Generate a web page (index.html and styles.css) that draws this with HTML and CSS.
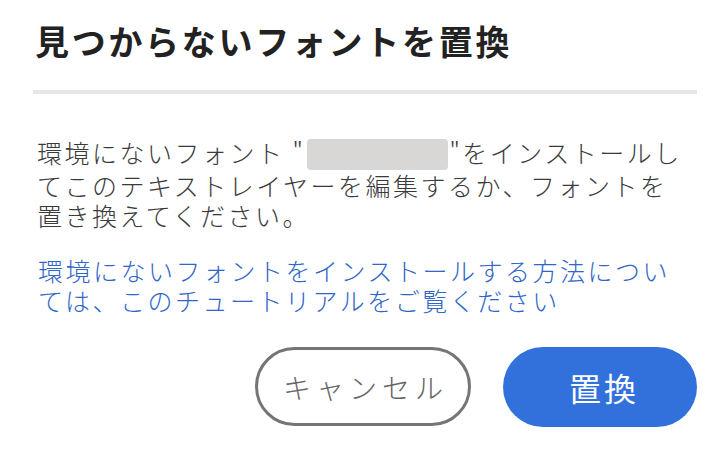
FILE: index.html
```html
<!DOCTYPE html>
<html lang="ja">
<head>
<meta charset="utf-8">
<title>見つからないフォントを置換</title>
<link rel="stylesheet" href="styles.css">
</head>
<body>
<div class="dialog">
  <h1 class="title">見つからないフォントを置換</h1>
  <div class="divider"></div>
  <p class="message">環境にないフォント "<span class="redacted"></span>"をインストールしてこのテキストレイヤーを編集するか、フォントを置き換えてください。</p>
  <p class="link">環境にないフォントをインストールする方法については、このチュートリアルをご覧ください</p>
  <div class="actions">
    <button class="btn btn-cancel">キャンセル</button>
    <button class="btn btn-primary">置換</button>
  </div>
</div>
</body>
</html>
```

FILE: styles.css
```css
html, body {
  margin: 0;
  padding: 0;
  background: #ffffff;
}

body {
  width: 714px;
  height: 460px;
  overflow: hidden;
  font-family: "Noto Sans CJK JP", "Noto Sans", sans-serif;
}

.dialog {
  padding: 21px 17px 0 33px;
}

.title {
  margin: 0 0 0 2px;
  font-size: 34px;
  line-height: 40px;
  font-weight: 700;
  letter-spacing: 2.7px;
  color: #222222;
}

.divider {
  margin-top: 29px;
  height: 4px;
  background: #e6e6e6;
}

.message {
  margin: 43px 7px 0 4px;
  font-size: 25px;
  line-height: 30px;
  font-weight: 300;
  letter-spacing: 2.5px;
  color: #3a3a3a;
}

.redacted {
  display: inline-block;
  width: 141px;
  height: 31px;
  vertical-align: -7px;
  background: #d9d7d6;
  border-radius: 4px;
  margin: 0 1px 0 2px;
}

.link {
  margin: 25px 7px 0 5px;
  font-size: 25px;
  line-height: 30px;
  font-weight: 300;
  letter-spacing: 2.5px;
  color: #2f66c8;
}

.actions {
  margin-top: 32px;
  display: flex;
  justify-content: flex-end;
  gap: 32px;
}

.btn {
  font-family: "Noto Sans CJK JP", "Noto Sans", sans-serif;
  border-radius: 40px;
  height: 80px;
  padding: 0;
  display: flex;
  align-items: center;
  justify-content: center;
  cursor: pointer;
}

.btn-cancel {
  width: 216px;
  height: 79px;
  border: 3px solid #757575;
  background: #ffffff;
  color: #666666;
  font-size: 28px;
  font-weight: 300;
  letter-spacing: 5px;
  padding-left: 5px;
}

.btn-primary {
  width: 194px;
  border: none;
  background: #3271db;
  color: #ffffff;
  font-size: 32px;
  letter-spacing: 3px;
  padding-left: 8px;
}
```
